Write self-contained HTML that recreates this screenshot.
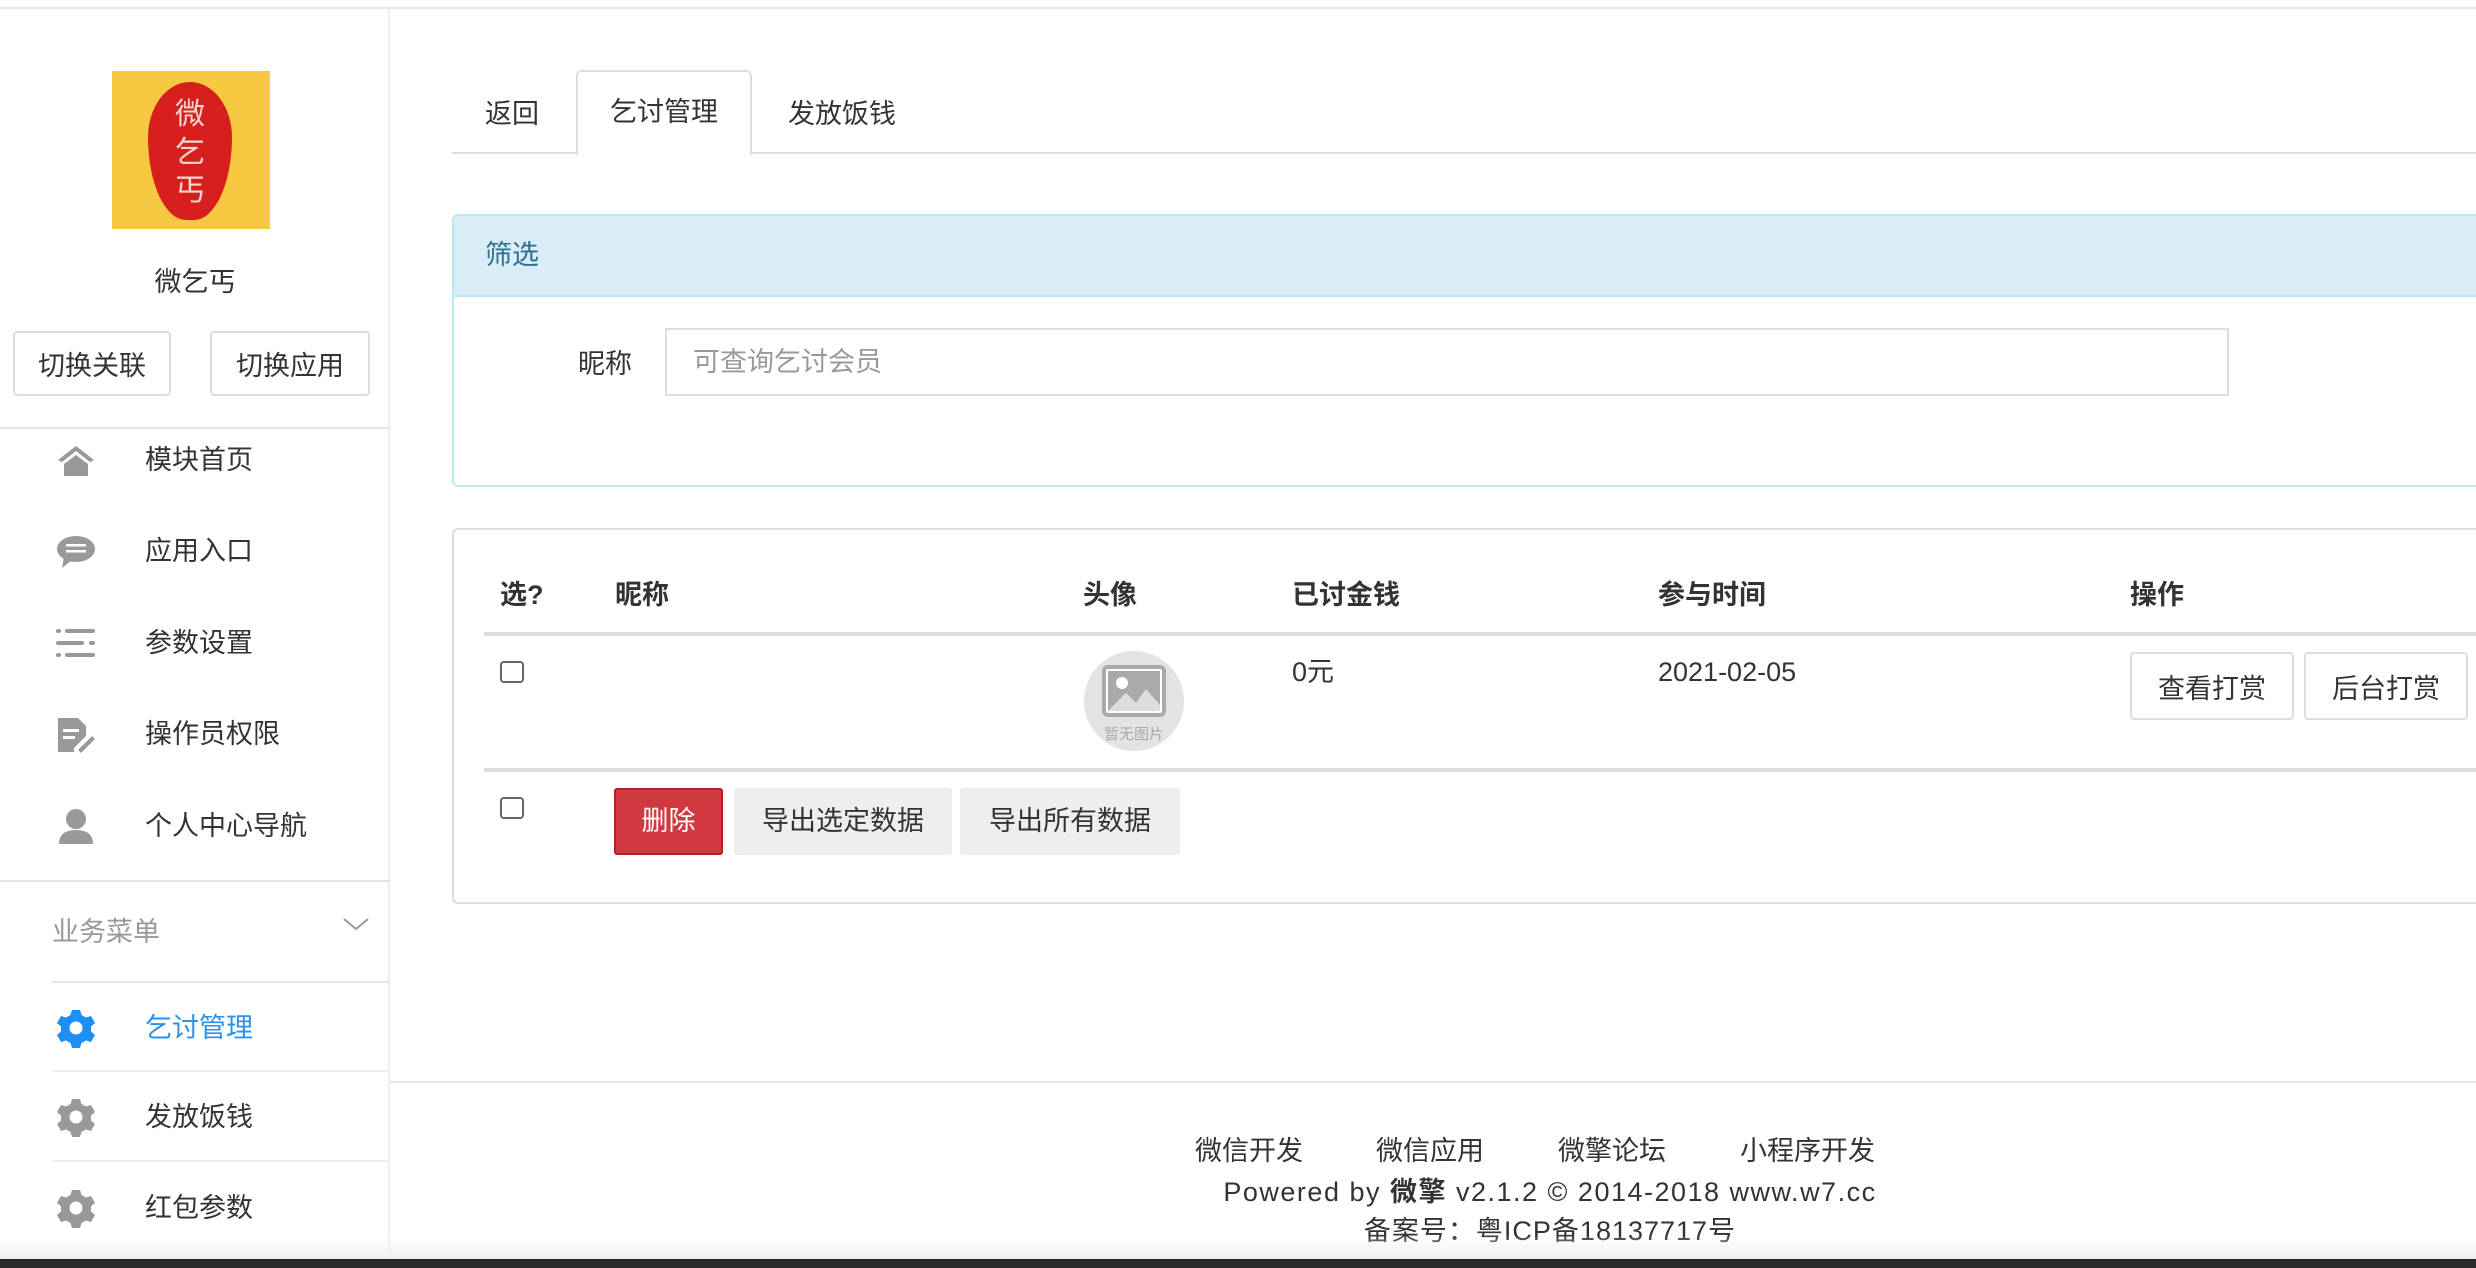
<!DOCTYPE html>
<html><head><meta charset="utf-8">
<style>
*{box-sizing:border-box;margin:0;padding:0}
body{width:2476px;height:1268px;overflow:hidden;background:#fff;font-family:"Liberation Sans","Noto Sans CJK SC",sans-serif;font-size:27px;color:#333;position:relative}
.a{position:absolute}
.btn{position:absolute;border:2px solid #ddd;border-radius:4px;background:#fff;display:flex;align-items:center;justify-content:center;font-size:27px;color:#333}
.mi{position:absolute;left:0;width:390px;height:40px}
.mi .t{position:absolute;left:145px;top:0;line-height:40px}
.mi svg{position:absolute;left:56px;top:0}
.th{position:absolute;top:575px;font-weight:bold;line-height:40px}
.cb{position:absolute;width:24px;height:22px;border:2px solid #666;border-radius:4px;background:#fff}
</style></head><body>
<div class="a" style="left:0;top:7px;width:2476px;height:2px;background:#e7e7e7"></div>
<div class="a" style="left:388px;top:9px;width:2px;height:1250px;background:#eee"></div>

<div class="a" style="left:112px;top:71px;width:158px;height:158px;background:#f7c842"></div>
<div class="a" style="left:148px;top:82px;width:84px;height:138px;background:#d7201e;border-radius:50% 50% 45% 45%/40% 40% 60% 60%"></div>
<div class="a" style="left:168px;top:96px;width:44px;color:#f3d6d0;font-size:30px;line-height:38px;text-align:center">微<br>乞<br>丐</div>
<div class="a" style="left:0;width:390px;top:262px;text-align:center;line-height:40px">微乞丐</div>
<div class="btn" style="left:13px;top:331px;width:158px;height:65px">切换关联</div>
<div class="btn" style="left:210px;top:331px;width:160px;height:65px">切换应用</div>
<div class="a" style="left:0;top:427px;width:390px;height:2px;background:#e5e5e5"></div>

<div class="mi" style="top:440px"><svg width="40" height="40" viewBox="0 0 40 40"><path d="M2 20 L20 6 L38 20 L34 22 L20 11 L6 22Z M8 24 L20 15 L32 24 L32 36 L8 36Z" fill="#999"/></svg><span class="t">模块首页</span></div>
<div class="mi" style="top:531px"><svg width="40" height="40" viewBox="0 0 40 40"><ellipse cx="20" cy="18" rx="19" ry="13" fill="#999"/><path d="M8 26 L6 37 L16 29Z" fill="#999"/><rect x="10" y="13" width="20" height="2.5" fill="#fff"/><rect x="10" y="19" width="20" height="2.5" fill="#fff"/></svg><span class="t">应用入口</span></div>
<div class="mi" style="top:623px"><svg width="40" height="40" viewBox="0 0 40 40"><g fill="#999"><rect x="0" y="6" width="5" height="4" rx="2"/><rect x="9" y="6" width="30" height="4" rx="2"/><rect x="0" y="18" width="28" height="4" rx="2"/><rect x="33" y="18" width="6" height="4" rx="2"/><rect x="0" y="30" width="5" height="4" rx="2"/><rect x="9" y="30" width="30" height="4" rx="2"/></g></svg><span class="t">参数设置</span></div>
<div class="mi" style="top:714px"><svg width="40" height="40" viewBox="0 0 40 40"><path d="M2 4 L22 4 L30 12 L30 22 L18 34 L18 38 L2 38Z" fill="#999"/><rect x="7" y="15" width="16" height="3" fill="#fff"/><rect x="7" y="22" width="12" height="3" fill="#fff"/><path d="M22 36 L36 22 L39 25 L25 39Z" fill="#999"/></svg><span class="t">操作员权限</span></div>
<div class="mi" style="top:806px"><svg width="40" height="40" viewBox="0 0 40 40"><circle cx="20" cy="13" r="10" fill="#999"/><path d="M3 38 Q3 24 20 24 Q37 24 37 38Z" fill="#999"/></svg><span class="t">个人中心导航</span></div>
<div class="a" style="left:0;top:880px;width:390px;height:2px;background:#e5e5e5"></div>
<div class="a" style="left:52px;top:912px;line-height:40px;color:#999">业务菜单</div>
<svg class="a" style="left:342px;top:915px" width="28" height="18" viewBox="0 0 28 18"><path d="M2 4 L14 14 L26 4" stroke="#999" stroke-width="2" fill="none"/></svg>
<div class="a" style="left:52px;top:981px;width:338px;height:2px;background:#e5e5e5"></div>

<div class="mi" style="top:1008px"><svg width="40" height="40" viewBox="0 0 40 40"><path d="M16 2h8l1.5 5 4.5 2.5 5-1.5 4 7-4 3.5v5l4 3.5-4 7-5-1.5-4.5 2.5-1.5 5h-8l-1.5-5-4.5-2.5-5 1.5-4-7 4-3.5v-5l-4-3.5 4-7 5 1.5 4.5-2.5Z" fill="#1e8ff5"/><circle cx="20" cy="20" r="6.5" fill="#fff"/></svg><span class="t" style="color:#2b91ef">乞讨管理</span></div>
<div class="a" style="left:52px;top:1070px;width:338px;height:2px;background:#eee"></div>
<div class="mi" style="top:1097px"><svg width="40" height="40" viewBox="0 0 40 40"><path d="M16 2h8l1.5 5 4.5 2.5 5-1.5 4 7-4 3.5v5l4 3.5-4 7-5-1.5-4.5 2.5-1.5 5h-8l-1.5-5-4.5-2.5-5 1.5-4-7 4-3.5v-5l-4-3.5 4-7 5 1.5 4.5-2.5Z" fill="#999"/><circle cx="20" cy="20" r="6.5" fill="#fff"/></svg><span class="t">发放饭钱</span></div>
<div class="a" style="left:52px;top:1160px;width:338px;height:2px;background:#eee"></div>
<div class="mi" style="top:1188px"><svg width="40" height="40" viewBox="0 0 40 40"><path d="M16 2h8l1.5 5 4.5 2.5 5-1.5 4 7-4 3.5v5l4 3.5-4 7-5-1.5-4.5 2.5-1.5 5h-8l-1.5-5-4.5-2.5-5 1.5-4-7 4-3.5v-5l-4-3.5 4-7 5 1.5 4.5-2.5Z" fill="#999"/><circle cx="20" cy="20" r="6.5" fill="#fff"/></svg><span class="t">红包参数</span></div>

<div class="a" style="left:452px;top:152px;width:2024px;height:2px;background:#ddd"></div>
<div class="a" style="left:485px;top:94px;line-height:40px">返回</div>
<div class="a" style="left:576px;top:70px;width:176px;height:85px;border:2px solid #ddd;border-bottom:none;border-radius:6px 6px 0 0;background:#fff;text-align:center;line-height:80px">乞讨管理</div>
<div class="a" style="left:788px;top:94px;line-height:40px">发放饭钱</div>

<div class="a" style="left:452px;top:214px;width:2040px;height:273px;border:2px solid #bce8f1;border-radius:6px;overflow:hidden">
 <div style="height:81px;background:#d9edf7;border-bottom:2px solid #bce8f1;color:#31708f;padding-left:31px;line-height:78px">筛选</div>
 <div class="a" style="left:124px;top:128px;line-height:40px">昵称</div>
 <div class="a" style="left:211px;top:112px;width:1564px;height:68px;border:2px solid #ddd;color:#999;padding-left:26px;line-height:64px">可查询乞讨会员</div>
</div>

<div class="a" style="left:452px;top:528px;width:2040px;height:376px;border:2px solid #ddd;border-radius:6px"></div>
<div class="th" style="left:500px">选?</div>
<div class="th" style="left:615px">昵称</div>
<div class="th" style="left:1083px">头像</div>
<div class="th" style="left:1292px">已讨金钱</div>
<div class="th" style="left:1658px">参与时间</div>
<div class="th" style="left:2130px">操作</div>
<div class="a" style="left:484px;top:632px;width:1992px;height:4px;background:#ddd"></div>
<div class="cb" style="left:500px;top:661px"></div>
<div class="a" style="left:1084px;top:651px;width:100px;height:100px;border-radius:50%;background:#e3e3e3"></div>
<svg class="a" style="left:1102px;top:665px" width="64" height="52" viewBox="0 0 64 52"><rect x="2" y="2" width="60" height="48" rx="4" fill="#fff" stroke="#aaa" stroke-width="4"/><rect x="6" y="6" width="52" height="40" fill="#aaa"/><circle cx="20" cy="18" r="6" fill="#fff"/><path d="M6 46 L24 28 L34 38 L44 24 L58 40 L58 46Z" fill="#fff" opacity=".6"/></svg>
<div class="a" style="left:1084px;top:723px;width:100px;text-align:center;font-size:15px;color:#aaa">暂无图片</div>
<div class="a" style="left:1292px;top:652px;line-height:40px">0元</div>
<div class="a" style="left:1658px;top:652px;line-height:40px">2021-02-05</div>
<div class="btn" style="left:2130px;top:652px;width:164px;height:68px">查看打赏</div>
<div class="btn" style="left:2304px;top:652px;width:164px;height:68px">后台打赏</div>
<div class="a" style="left:484px;top:768px;width:1992px;height:4px;background:#ddd"></div>
<div class="cb" style="left:500px;top:797px"></div>
<div class="a" style="left:614px;top:788px;width:109px;height:67px;background:#d0393e;border:2px solid #b52025;border-radius:3px;color:#fff;text-align:center;line-height:63px">删除</div>
<div class="a" style="left:734px;top:788px;width:218px;height:67px;background:#eee;border-radius:3px;text-align:center;line-height:67px">导出选定数据</div>
<div class="a" style="left:960px;top:788px;width:220px;height:67px;background:#eee;border-radius:3px;text-align:center;line-height:67px">导出所有数据</div>

<div class="a" style="left:390px;top:1081px;width:2086px;height:2px;background:#e5e5e5"></div>
<div class="a" style="left:1195px;top:1131px;line-height:40px">微信开发</div>
<div class="a" style="left:1376px;top:1131px;line-height:40px">微信应用</div>
<div class="a" style="left:1558px;top:1131px;line-height:40px">微擎论坛</div>
<div class="a" style="left:1740px;top:1131px;line-height:40px">小程序开发</div>
<div class="a" style="left:1000px;width:1100px;top:1172px;text-align:center;line-height:40px;letter-spacing:1.5px">Powered by <b>微擎</b> v2.1.2 © 2014-2018 www.w7.cc</div>
<div class="a" style="left:1000px;width:1100px;top:1211px;text-align:center;line-height:40px;letter-spacing:1px">备案号：粤ICP备18137717号</div>
<div class="a" style="left:0;top:1235px;width:2476px;height:24px;background:linear-gradient(#fff0,#f0f0f0)"></div>
<div class="a" style="left:0;top:1259px;width:2476px;height:9px;background:#2a2a2a"></div>
</body></html>
